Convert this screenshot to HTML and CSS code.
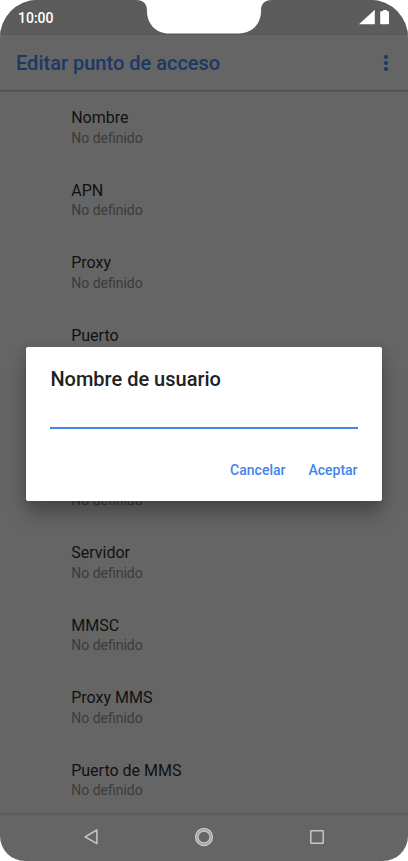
FILE: index.html
```html
<!DOCTYPE html>
<html lang="es">
<head>
<meta charset="utf-8">
<title>Editar punto de acceso</title>
<link rel="stylesheet" href="styles.css">
</head>
<body>
<div class="phone">
  <header class="status">
    <span class="clock">10:00</span>
    <svg class="status-icons" width="32" height="16" viewBox="0 0 32 16" fill="#fff">
      <path d="M0 15.3L15.8 0.8V15.3Z"/>
      <path d="M21.8 2.2H24V1H28V2.2H29.2Q30 2.2 30 3V14.5Q30 15.3 29.2 15.3H22Q21.2 15.3 21.2 14.5V3Q21.2 2.2 21.8 2.2Z"/>
    </svg>
  </header>
  <svg class="notch" width="136" height="34" viewBox="0 0 136 34"><path d="M0 0C8 0 11 4 11 11C11 24 20 33.5 33 33.5H103C116 33.5 125 24 125 11C125 4 128 0 136 0Z" fill="#fff"/></svg>
  <div class="appbar">
    <h1>Editar punto de acceso</h1>
    <svg width="6" height="18" viewBox="0 0 6 18" fill="#1c3865"><circle cx="3" cy="3" r="2.1"/><circle cx="3" cy="9" r="2.1"/><circle cx="3" cy="15" r="2.1"/></svg>
  </div>
  <main class="list">
    <div class="item"><b>Nombre</b><span>No definido</span></div>
    <div class="item"><b>APN</b><span>No definido</span></div>
    <div class="item"><b>Proxy</b><span>No definido</span></div>
    <div class="item"><b>Puerto</b><span>No definido</span></div>
    <div class="item"><b>Nombre de usuario</b><span>No definido</span></div>
    <div class="item"><b>Contraseña</b><span>No definido</span></div>
    <div class="item"><b>Servidor</b><span>No definido</span></div>
    <div class="item"><b>MMSC</b><span>No definido</span></div>
    <div class="item"><b>Proxy MMS</b><span>No definido</span></div>
    <div class="item"><b>Puerto de MMS</b><span>No definido</span></div>
  </main>
  <nav class="nav">
    <svg width="16" height="18" viewBox="0 0 16 18"><path d="M13.9 2V15.7L2.1 8.8Z"/></svg>
    <svg width="20" height="20" viewBox="0 0 20 20"><circle cx="10" cy="10" r="7.3" stroke="#969696" stroke-width="2.4"/><circle cx="10" cy="10" r="8.4"/><circle cx="10" cy="10" r="6.1"/></svg>
    <svg width="16" height="16" viewBox="0 0 16 16"><rect x="1.8" y="1.8" width="12.4" height="12.4" rx=".5"/></svg>
  </nav>
  <section class="dialog">
    <h2>Nombre de usuario</h2>
    <div class="field"></div>
    <div class="actions"><span>Cancelar</span><span>Aceptar</span></div>
  </section>
</div>
</body>
</html>
```
FILE: styles.css
```css
* { box-sizing: border-box; }
body { margin: 0; background: #fff; font-family: Roboto, sans-serif; }
.phone {
  position: relative;
  width: 408px;
  height: 861px;
  overflow: hidden;
  display: flex;
  flex-direction: column;
  background: #656565;
  border-radius: 37px 37px 25px 25px / 38px 38px 25px 25px;
}
.status {
  height: 35px;
  flex: none;
  display: flex;
  justify-content: space-between;
  background: #5c5c5c;
  padding: 9px 18px 0 18px;
}
.clock { color: #fff; font-size: 14px; line-height: 18px; font-weight: 500; }
.status-icons { margin-right: -1px; }
.notch { position: absolute; left: 136px; top: 0; }
.appbar {
  height: 55px;
  flex: none;
  display: flex;
  align-items: center;
  justify-content: space-between;
  padding: 0 19px 0 16px;
  box-shadow: 0 1px 2px rgba(0, 0, 0, .3);
}
h1 { margin: 0; font-size: 20px; line-height: 24px; font-weight: 500; color: #1c3865; }
.list { flex: none; padding: 18px 0 0 71.2px; height: 723px; overflow: hidden; }
.item { height: 72.5px; display: flex; flex-direction: column; }
.item b { height: 19.7px; font-size: 16px; line-height: 20px; font-weight: 400; color: #111; }
.item span { font-size: 14px; line-height: 20px; color: #3b3b3b; }
.nav {
  flex: 1;
  display: flex;
  align-items: center;
  justify-content: space-between;
  padding: 0 83px 2px;
  border-top: 2px solid #5c5c5c;
}
.nav svg { fill: none; stroke: #c6c6c6; stroke-width: 1.5; stroke-linejoin: round; }
.dialog {
  position: absolute;
  left: 26.4px;
  top: 347px;
  width: 355.2px;
  height: 154px;
  padding: 20px 24px 0;
  background: #fff;
  border-radius: 2px;
  box-shadow: 0 14px 20px rgba(0, 0, 0, .24), 0 3px 12px rgba(0, 0, 0, .14);
}
h2 { margin: 0; font-size: 20px; line-height: 24px; font-weight: 500; color: #212121; }
.field { height: 38.4px; border-bottom: 2px solid #4285e8; }
.actions { display: flex; justify-content: flex-end; gap: 23px; padding-top: 31px; font-size: 14px; line-height: 20px; font-weight: 500; color: #4285e8; }
```
